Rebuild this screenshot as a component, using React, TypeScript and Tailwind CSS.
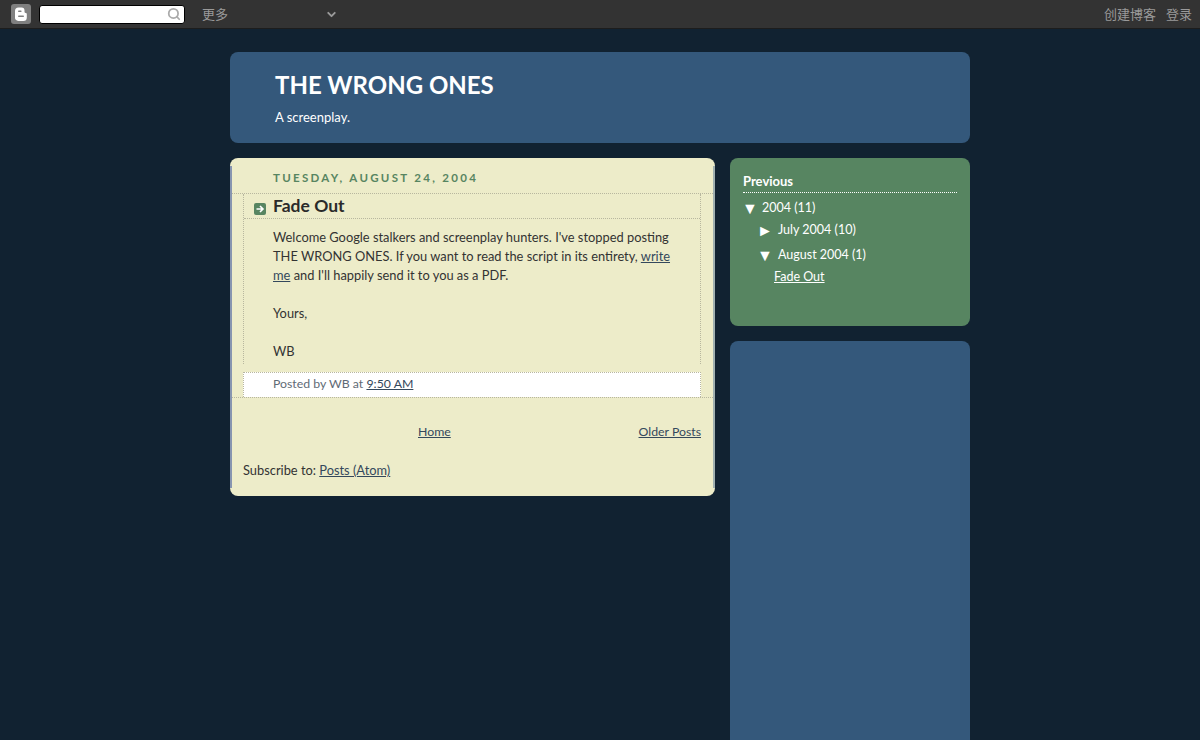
import { Search, ChevronDown } from 'lucide-react';

function BloggerLogo() {
  return (
    <div className="w-5 h-5 rounded-[3px] bg-[#808080] flex items-center justify-center">
      <svg width="12" height="14" viewBox="0 0 12 14">
        <path d="M3.5 0.5h3a3 3 0 0 1 3 3v1.2a1.3 1.3 0 0 0 1.3 1.3 1 1 0 0 1 1 1v3.5a3.5 3.5 0 0 1-3.5 3.5h-5A3.3 3.3 0 0 1 0 10.2V4a3.5 3.5 0 0 1 3.5-3.5z" fill="#fff" />
        <rect x="3" y="3.4" width="3.6" height="1.5" rx="0.75" fill="#808080" />
        <rect x="3" y="8.6" width="6" height="1.5" rx="0.75" fill="#808080" />
      </svg>
    </div>
  );
}

function Navbar() {
  return (
    <div className='h-[29px] bg-[#333333] border-b border-[#1d1d1d] flex items-center pl-[11px] pr-[7px] font-["Noto_Sans_CJK_SC",sans-serif] text-[13px] text-[#9a9a9a]'>
      <BloggerLogo />
      <div className="ml-2 w-[146px] h-[19px] bg-white rounded-[3px] border border-black flex items-center justify-end pr-[3px]">
        <Search size={14} strokeWidth={3} className="text-[#aaaaaa]" />
      </div>
      <span className="ml-[17px]">更多</span>
      <ChevronDown size={13} strokeWidth={3.5} className="ml-[97px] text-[#9a9a9a]" />
      <div className="ml-auto flex gap-[10px] pr-[1px]">
        <span>创建博客</span>
        <span>登录</span>
      </div>
    </div>
  );
}

function Header() {
  return (
    <div className="h-[91px] rounded-lg bg-[#34587b] pl-[45px] pt-[15px] text-white">
      <h1 className="text-[24px] leading-[36px] font-bold">THE WRONG ONES</h1>
      <p className="mt-[5px] text-[13px] leading-[18px]">A screenplay.</p>
    </div>
  );
}

function Post() {
  return (
    <div className="w-[485px] rounded-lg bg-[#edecc9] py-[8px] text-[12.85px] leading-[19px] text-[#333333]">
      <div className="border-x-2 border-l-[#8795b0] border-r-[#a0b0b0] pb-[7px]">
        <h2 className="pl-[41px] pt-[4px] h-[28px] text-[11.5px] leading-[16px] font-bold tracking-[0.2em] uppercase text-[#578561] border-b border-dotted border-[#b8b79f]">
          Tuesday, August 24, 2004
        </h2>
        <div className="mx-[11px] w-[458px] border-x border-dotted border-[#b8b79f]">
          <div className="h-[25px] flex items-center border-b border-dotted border-[#b8b79f] pl-[10px]">
            <svg width="12" height="12" viewBox="0 0 12 12" className="mt-[5px]">
              <rect width="12" height="12" rx="2" fill="#578561" />
              <path d="M2.5 6h6M6 3l3 3-3 3" stroke="#fff" strokeWidth="1.6" fill="none" />
            </svg>
            <span className="ml-[7px] -mt-[2px] text-[17.5px] font-bold text-[#2a2a2a]">Fade Out</span>
          </div>
          <div className="pl-[29px] pr-[20px] pt-[9px] pb-[3px]">
            <p>
              Welcome Google stalkers and screenplay hunters. I've stopped posting<br />
              THE WRONG ONES. If you want to read the script in its entirety, <a className="underline text-[#34485c]" href="#">write<br />me</a> and I'll happily send it to you as a PDF.
            </p>
            <p className="mt-[19px]">Yours,</p>
            <p className="mt-[19px]">WB</p>
          </div>
        </div>
        <div className="mt-[8px] border-b border-dotted border-[#b8b79f] text-[12.3px]">
          <div className="mx-[11px] w-[458px] h-[25px] bg-white border-x border-t border-dotted border-[#b8b79f] pl-[29px] leading-[21px] text-[#5f6b76]">
            Posted by WB at <a className="underline text-[#34485c]" href="#">9:50 AM</a>
          </div>
        </div>
        <div className="mx-[11px] mt-[24px] w-[458px] flex text-[12.3px]">
          <a className="ml-[175px] underline text-[#34485c]" href="#">Home</a>
          <a className="ml-auto underline text-[#34485c]" href="#">Older Posts</a>
        </div>
        <p className="mx-[11px] mt-[20px] pb-[1px]">
          Subscribe to: <a className="underline text-[#34485c]" href="#">Posts (Atom)</a>
        </p>
      </div>
    </div>
  );
}

function Sidebar() {
  return (
    <div className="w-[240px] flex flex-col gap-[15px]">
      <div className="h-[168px] rounded-lg bg-[#578561] px-[13px] pt-[14px] text-white text-[12.5px] leading-[19px]">
        <h3 className="font-bold text-[13px] border-b border-dotted border-white h-[21px]">Previous</h3>
        <div className="mt-[5px] flex items-center">
          <span className="text-[16px] leading-[17px] w-[19px] -ml-[1px] mr-[1px]">▼</span>
          <span>2004 (11)</span>
        </div>
        <div className="mt-[3px] pl-[15px] flex items-center">
          <span className="text-[16px] leading-[17px] w-[20px] -ml-[1px] mr-[1px]">►</span>
          <span>July 2004 (10)</span>
        </div>
        <div className="mt-[6px] pl-[15px] flex items-center">
          <span className="text-[16px] leading-[17px] w-[20px] -ml-[1px] mr-[1px]">▼</span>
          <span>August 2004 (1)</span>
        </div>
        <a className="block mt-[3px] ml-[31px] underline" href="#">Fade Out</a>
      </div>
      <div className="h-[399px] rounded-t-lg bg-[#34587b]" />
    </div>
  );
}

export default function App() {
  return (
    <div className='h-[740px] overflow-hidden bg-[#112231] font-["Lato",sans-serif]'>
      <Navbar />
      <div className="w-[740px] mx-auto pt-[23px]">
        <Header />
        <div className="mt-[15px] flex items-start justify-between">
          <Post />
          <Sidebar />
        </div>
      </div>
    </div>
  );
}
